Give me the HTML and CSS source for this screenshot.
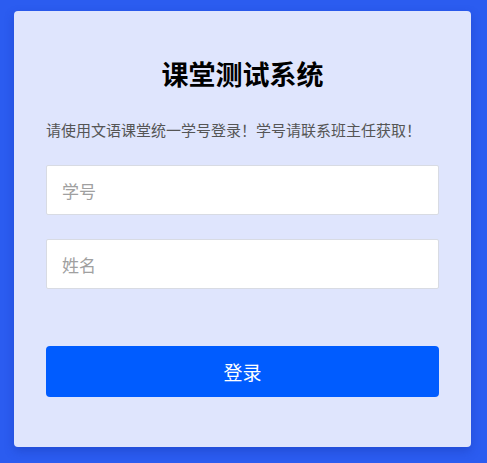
FILE: index.html
```html
<!DOCTYPE html>
<html lang="zh-CN">
  <head>
    <meta charset="UTF-8" />
    <meta name="viewport" content="width=device-width, initial-scale=1.0" />
    <title>课堂测试系统</title>
    <link rel="stylesheet" href="styles.css">
  </head>
  <body>
    <div class="page">
      <div class="login-card">
        <h2>课堂测试系统</h2>
        <p class="tip">请使用文语课堂统一学号登录！学号请联系班主任获取！</p>
        <form id="login-form">
          <div class="form-group">
            <input type="text" id="student-no" name="studentNo" placeholder="学号" />
          </div>
          <div class="form-group">
            <input type="text" id="student-name" name="studentName" placeholder="姓名" />
          </div>
          <button type="button" class="login-btn">登录</button>
        </form>
      </div>
    </div>
  </body>
</html>
```

FILE: styles.css
```css
body {
  margin: 0;
  height: 100vh;
  background-color: #2b5cf0;
  font-family: "Noto Sans CJK SC", "Noto Sans", sans-serif;
  overflow: hidden;
}

.page {
  padding: 11px 0 0 14px;
}

.login-card {
  width: 457px;
  box-sizing: border-box;
  padding: 43px 32px 50px;
  background-color: #dfe5fd;
  border-radius: 4px;
  box-shadow: 0 4px 10px rgba(20, 50, 160, 0.35);
}

.login-card h2 {
  margin: 0 0 26px;
  font-size: 27px;
  line-height: 39px;
  font-weight: bold;
  color: #000;
  text-align: center;
}

.tip {
  margin: 0 0 24px;
  font-size: 15px;
  line-height: 22px;
  color: #555;
  white-space: nowrap;
}

.form-group {
  margin-bottom: 24px;
}

.form-group input {
  display: block;
  width: 100%;
  height: 50px;
  box-sizing: border-box;
  padding: 0 15px;
  border: 1px solid #d8dbe3;
  border-radius: 2px;
  background-color: #fff;
  font-family: inherit;
  font-size: 17px;
  color: #333;
  outline: none;
}

.form-group input::placeholder {
  color: #a0a0a0;
}

.login-btn {
  display: block;
  width: 100%;
  height: 51px;
  margin-top: 57px;
  border: none;
  border-radius: 4px;
  background-color: #005cff;
  color: #fff;
  font-family: inherit;
  font-size: 19px;
  cursor: pointer;
}

.login-btn:hover {
  background-color: #0050e0;
}
```
